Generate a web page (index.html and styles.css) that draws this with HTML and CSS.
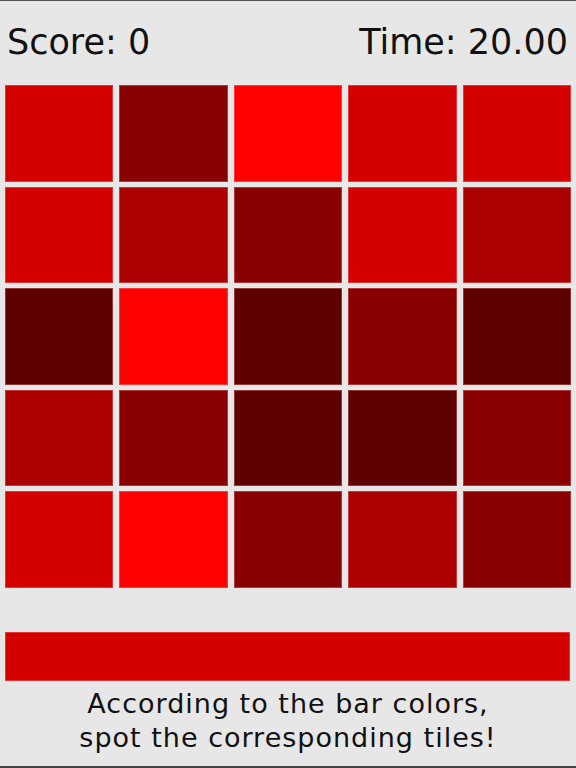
FILE: index.html
```html
<!DOCTYPE html>
<html>
<head>
<meta charset="utf-8">
<link rel="stylesheet" href="styles.css">
</head>
<body>
<div class="screen">
  <div class="header">
    <span class="score">Score: 0</span>
    <span class="time">Time: 20.00</span>
  </div>
  <div class="grid">
    <div class="tile c2"></div><div class="tile c4"></div><div class="tile c1"></div><div class="tile c2"></div><div class="tile c2"></div>
    <div class="tile c2"></div><div class="tile c3"></div><div class="tile c4"></div><div class="tile c2"></div><div class="tile c3"></div>
    <div class="tile c5"></div><div class="tile c1"></div><div class="tile c5"></div><div class="tile c4"></div><div class="tile c5"></div>
    <div class="tile c3"></div><div class="tile c4"></div><div class="tile c5"></div><div class="tile c5"></div><div class="tile c4"></div>
    <div class="tile c2"></div><div class="tile c1"></div><div class="tile c4"></div><div class="tile c3"></div><div class="tile c4"></div>
  </div>
  <div class="bar"></div>
  <p class="hint">According to the bar colors,<br>spot the corresponding tiles!</p>
</div>
</body>
</html>
```
FILE: styles.css
```css
html, body {
  margin: 0;
  padding: 0;
  background: #e7e7e7;
}
.screen {
  box-sizing: border-box;
  width: 576px;
  height: 768px;
  border-top: 1px solid #555;
  border-bottom: 2px solid #444;
  overflow: hidden;
  display: flex;
  flex-direction: column;
}
.header {
  display: flex;
  justify-content: space-between;
  padding: 21px 8px 0 7px;
  height: 63px;
  font-family: "DejaVu Sans", sans-serif;
  font-size: 35px;
  line-height: 40px;
  color: #111;
}
.grid {
  display: grid;
  grid-template-columns: repeat(5, 1fr);
  grid-template-rows: repeat(5, 96.5px);
  gap: 5px 6px;
  margin: 0 5px;
}
.tile {
  box-shadow: inset 0 0 0 1px rgba(255, 160, 160, 0.35);
}
.c1 { background: #ff0000; }
.c2 { background: #d40000; }
.c3 { background: #aa0000; }
.c4 { background: #880000; }
.c5 { background: #5f0000; }
.bar {
  margin: 44.5px 6px 0 5px;
  height: 49px;
  background: #d40000;
  box-shadow: inset 0 0 0 1px rgba(255, 160, 160, 0.35);
}
.hint {
  margin: 6px 0 0;
  text-align: center;
  font-family: "DejaVu Sans", sans-serif;
  font-size: 27px;
  line-height: 34px;
  letter-spacing: 1px;
  color: #111;
}
```
